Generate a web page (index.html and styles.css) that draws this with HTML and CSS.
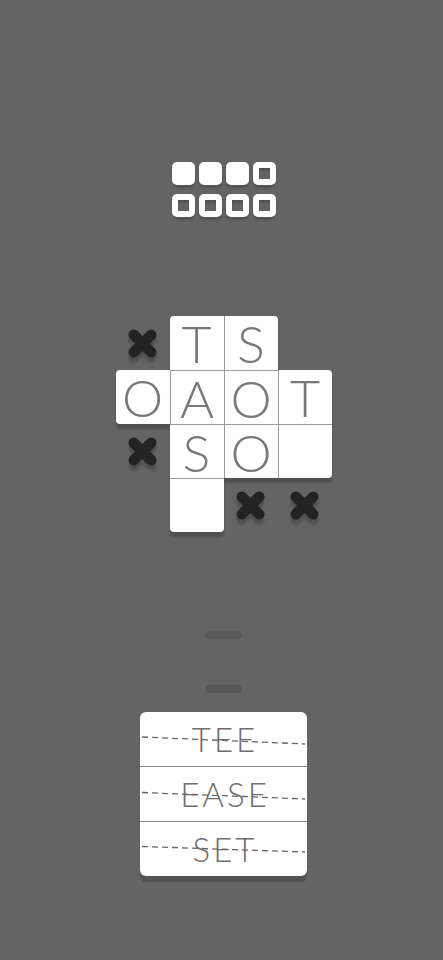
FILE: index.html
```html
<!DOCTYPE html>
<html>
<head>
<meta charset="utf-8">
<link rel="stylesheet" href="styles.css">
</head>
<body>
<main class="screen">
  <div class="progress">
    <span class="pip full"></span><span class="pip full"></span><span class="pip full"></span><span class="pip"></span>
    <span class="pip"></span><span class="pip"></span><span class="pip"></span><span class="pip"></span>
  </div>

  <div class="board">
    <div class="mark r1 c1"><svg viewBox="0 0 32 32"><path d="M7 7L25 25M25 7L7 25"/></svg></div>
    <div class="cell r1 c2 tl">T</div>
    <div class="cell r1 c3 bl tr">S</div>

    <div class="cell r2 c1 tl blc">O</div>
    <div class="cell r2 c2 bl bt">A</div>
    <div class="cell r2 c3 bl bt">O</div>
    <div class="cell r2 c4 bl tr">T</div>

    <div class="mark r3 c1"><svg viewBox="0 0 32 32"><path d="M7 7L25 25M25 7L7 25"/></svg></div>
    <div class="cell r3 c2 bt">S</div>
    <div class="cell r3 c3 bl bt">O</div>
    <div class="cell r3 c4 bl bt brc"></div>

    <div class="cell r4 c2 bt blc brc"></div>
    <div class="mark r4 c3"><svg viewBox="0 0 32 32"><path d="M7 7L25 25M25 7L7 25"/></svg></div>
    <div class="mark r4 c4"><svg viewBox="0 0 32 32"><path d="M7 7L25 25M25 7L7 25"/></svg></div>
  </div>

  <div class="bars">
    <span class="bar"></span>
    <span class="bar"></span>
  </div>

  <div class="words">
    <div class="word"><span>TEE</span><svg class="strike" viewBox="0 0 167 54" preserveAspectRatio="none"><line x1="2" y1="25" x2="165" y2="32"/></svg></div>
    <div class="word"><span>EASE</span><svg class="strike" viewBox="0 0 167 54" preserveAspectRatio="none"><line x1="2" y1="25.5" x2="165" y2="32"/></svg></div>
    <div class="word"><span>SET</span><svg class="strike" viewBox="0 0 167 54" preserveAspectRatio="none"><line x1="2" y1="24.5" x2="165" y2="30"/></svg></div>
  </div>
</main>
</body>
</html>
```

FILE: styles.css
```css
html, body {
  margin: 0;
  padding: 0;
  background: #646464;
}
body {
  width: 443px;
  height: 960px;
  overflow: hidden;
  font-family: "Lato", "Liberation Sans", sans-serif;
}
.screen {
  display: flex;
  flex-direction: column;
  align-items: center;
  padding-top: 162px;
  padding-left: 4px;
  box-sizing: border-box;
  width: 443px;
}

/* progress pips */
.progress {
  display: grid;
  grid-template-columns: repeat(4, 23px);
  grid-auto-rows: 23px;
  column-gap: 4px;
  row-gap: 9px;
  filter: drop-shadow(0 3px 1px rgba(0,0,0,0.18));
}
.pip {
  box-sizing: border-box;
  border: 6px solid #ffffff;
  border-radius: 5px;
}
.pip.full {
  background: #ffffff;
}

/* board */
.board {
  margin-top: 99px;
  display: grid;
  grid-template-columns: repeat(4, 54px);
  grid-template-rows: repeat(4, 54px);
  filter: drop-shadow(0 5px 1px rgba(0,0,0,0.2));
}
.r1 { grid-row: 1; }
.r2 { grid-row: 2; }
.r3 { grid-row: 3; }
.r4 { grid-row: 4; }
.c1 { grid-column: 1; }
.c2 { grid-column: 2; }
.c3 { grid-column: 3; }
.c4 { grid-column: 4; }

.cell {
  box-sizing: border-box;
  background: #ffffff;
  display: flex;
  align-items: center;
  justify-content: center;
  font-size: 52px;
  font-weight: 300;
  color: #787878;
  line-height: 44px;
}
.cell.bl { border-left: 1px solid #9a9a9a; }
.cell.bt { border-top: 1px solid #9a9a9a; }
.cell.tl { border-top-left-radius: 4px; }
.cell.tr { border-top-right-radius: 4px; }
.cell.blc { border-bottom-left-radius: 4px; }
.cell.brc { border-bottom-right-radius: 4px; }

.mark {
  display: flex;
  align-items: center;
  justify-content: center;
}
.mark svg {
  width: 33px;
  height: 31px;
}
.mark path {
  stroke: #232323;
  stroke-width: 11;
  stroke-linecap: round;
  fill: none;
}

/* middle bars */
.bars {
  margin-top: 99px;
  display: flex;
  flex-direction: column;
  gap: 46px;
}
.bar {
  display: block;
  width: 37px;
  height: 8px;
  border-radius: 4px;
  background: #585858;
}

/* word list */
.words {
  margin-top: 19px;
  width: 167px;
  background: #ffffff;
  border-radius: 6px;
  box-shadow: 0 6px 1px rgba(0,0,0,0.17);
  display: flex;
  flex-direction: column;
}
.word {
  position: relative;
  height: 54px;
  display: flex;
  align-items: center;
  justify-content: center;
  font-size: 33px;
  font-weight: 300;
  color: #6e6e6e;
  line-height: 1;
  letter-spacing: 3px;
  padding-left: 3px;
}
.word + .word {
  border-top: 1px solid #8a8a8a;
}
.strike {
  position: absolute;
  left: 0;
  top: 0;
  width: 167px;
  height: 54px;
}
.strike line {
  stroke: #666666;
  stroke-width: 1.3;
  stroke-dasharray: 6 4;
}
```
